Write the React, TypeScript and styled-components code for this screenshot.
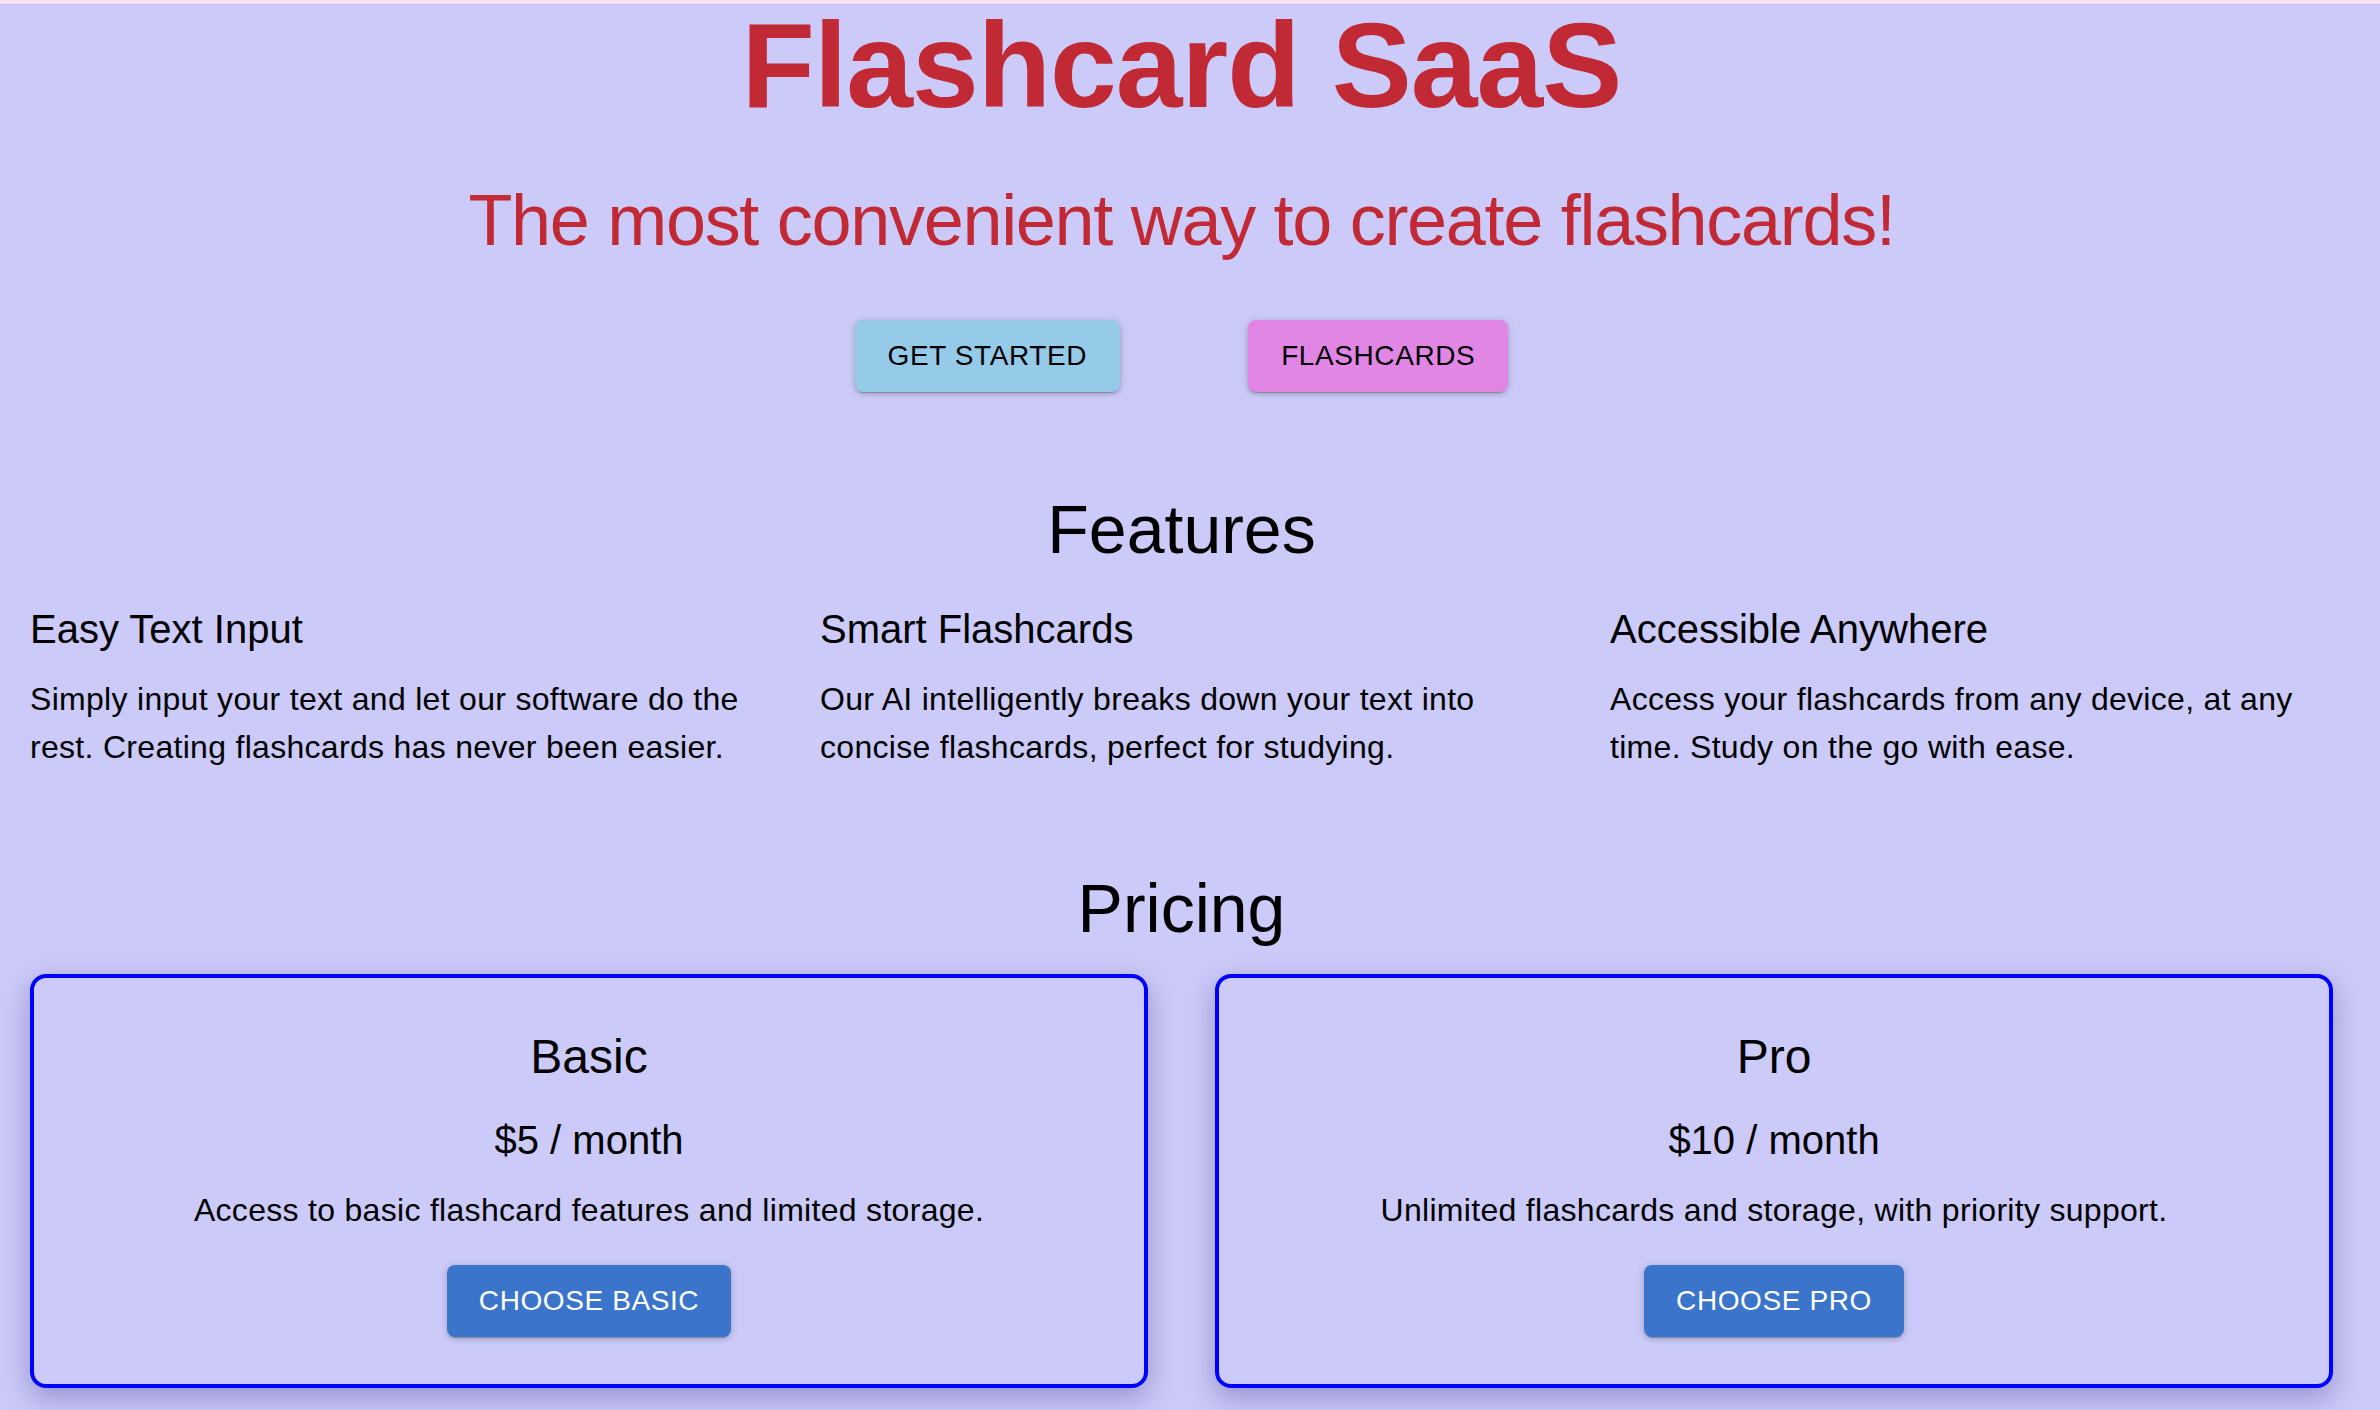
import styled, { createGlobalStyle } from 'styled-components';

const GlobalStyle = createGlobalStyle`
    html, body {
        margin: 0;
        padding: 0;
        background: #cbcaf8;
    }
    body {
        font-family: 'Liberation Sans', Arial, Helvetica, sans-serif;
        color: #000;
    }
    * {
        box-sizing: border-box;
    }
`;

const TopStrip = styled.div`
    height: 5px;
    background: #f8e0f4;
    border-bottom: 1px solid #c6b7dc;
`;

const Page = styled.main`
    width: 2380px;
    padding: 0 47px 40px 30px;
    display: flex;
    flex-direction: column;
    align-items: stretch;
`;

const Hero = styled.section`
    display: flex;
    flex-direction: column;
    align-items: center;
`;

const Title = styled.h1`
    margin: 0;
    font-size: 120px;
    line-height: 120px;
    font-weight: 700;
    color: #c12a34;
    letter-spacing: -1px;
`;

const Subtitle = styled.h2`
    margin: 47px 0 0;
    font-size: 72px;
    line-height: 96px;
    font-weight: 400;
    color: #c12a34;
    letter-spacing: -1.3px;
`;

const ButtonRow = styled.div`
    display: flex;
    gap: 128px;
    margin-top: 52px;
`;

const HeroButton = styled.button<{ $bg: string }>`
    height: 72px;
    padding: 0 33px;
    border: none;
    border-radius: 8px;
    background: ${(p) => p.$bg};
    color: #000;
    font-family: inherit;
    font-size: 28px;
    letter-spacing: 0.6px;
    text-transform: uppercase;
    box-shadow: 0 3px 1px -2px rgba(0, 0, 0, 0.2),
        0 2px 4px 0 rgba(0, 0, 0, 0.14), 0 1px 10px 0 rgba(0, 0, 0, 0.12);
    cursor: pointer;
`;

const SectionHeading = styled.h3<{ $top: number }>`
    margin: ${(p) => p.$top}px 0 0;
    text-align: center;
    font-size: 68px;
    line-height: 84px;
    font-weight: 400;
`;

const FeatureGrid = styled.div`
    display: grid;
    grid-template-columns: repeat(3, 1fr);
    column-gap: 67px;
    margin-top: 26px;
`;

const FeatureItem = styled.div`
    display: flex;
    flex-direction: column;
`;

const FeatureTitle = styled.h4`
    margin: 0 0 14px;
    font-size: 40px;
    line-height: 64px;
    font-weight: 400;
`;

const FeatureText = styled.p`
    margin: 0;
    font-size: 32px;
    line-height: 48px;
    letter-spacing: 0.3px;
`;

const PricingGrid = styled.div`
    display: grid;
    grid-template-columns: repeat(2, 1fr);
    column-gap: 67px;
    margin-top: 24px;
`;

const PriceCard = styled.div`
    display: flex;
    flex-direction: column;
    align-items: center;
    padding: 47px 32px;
    border: 4px solid #0000ff;
    border-radius: 16px;
    box-shadow: 0 10px 28px rgba(40, 30, 120, 0.32);
`;

const PlanName = styled.div`
    font-size: 48px;
    line-height: 64px;
    margin-bottom: 19px;
`;

const PlanPrice = styled.div`
    font-size: 40px;
    line-height: 64px;
    margin-bottom: 14px;
`;

const PlanText = styled.p`
    margin: 0;
    font-size: 32px;
    line-height: 48px;
    letter-spacing: 0.3px;
`;

const PlanButton = styled.button`
    margin-top: 31px;
    height: 72px;
    padding: 0 32px;
    border: none;
    border-radius: 8px;
    background: #3a75cb;
    color: #fff;
    font-family: inherit;
    font-size: 28px;
    letter-spacing: 0.6px;
    text-transform: uppercase;
    box-shadow: 0 3px 1px -2px rgba(0, 0, 0, 0.2),
        0 2px 4px 0 rgba(0, 0, 0, 0.14), 0 1px 10px 0 rgba(0, 0, 0, 0.12);
    cursor: pointer;
`;

const features = [
    {
        title: 'Easy Text Input',
        text: 'Simply input your text and let our software do the rest. Creating flashcards has never been easier.',
    },
    {
        title: 'Smart Flashcards',
        text: 'Our AI intelligently breaks down your text into concise flashcards, perfect for studying.',
    },
    {
        title: 'Accessible Anywhere',
        text: 'Access your flashcards from any device, at any time. Study on the go with ease.',
    },
];

const plans = [
    {
        name: 'Basic',
        price: '$5 / month',
        text: 'Access to basic flashcard features and limited storage.',
        action: 'Choose Basic',
    },
    {
        name: 'Pro',
        price: '$10 / month',
        text: 'Unlimited flashcards and storage, with priority support.',
        action: 'Choose Pro',
    },
];

const App = () => {
    return (
        <>
            <GlobalStyle />
            <TopStrip />
            <Page>
                {/* hero */}
                <Hero>
                    <Title>Flashcard SaaS</Title>
                    <Subtitle>The most convenient way to create flashcards!</Subtitle>
                    <ButtonRow>
                        <HeroButton $bg="#95cbe8">Get Started</HeroButton>
                        <HeroButton $bg="#e286e6">Flashcards</HeroButton>
                    </ButtonRow>
                </Hero>

                {/* features */}
                <SectionHeading $top={95}>Features</SectionHeading>
                <FeatureGrid>
                    {features.map((f) => (
                        <FeatureItem key={f.title}>
                            <FeatureTitle>{f.title}</FeatureTitle>
                            <FeatureText>{f.text}</FeatureText>
                        </FeatureItem>
                    ))}
                </FeatureGrid>

                {/* pricing */}
                <SectionHeading $top={95}>Pricing</SectionHeading>
                <PricingGrid>
                    {plans.map((p) => (
                        <PriceCard key={p.name}>
                            <PlanName>{p.name}</PlanName>
                            <PlanPrice>{p.price}</PlanPrice>
                            <PlanText>{p.text}</PlanText>
                            <PlanButton>{p.action}</PlanButton>
                        </PriceCard>
                    ))}
                </PricingGrid>
            </Page>
        </>
    );
};

export default App;
